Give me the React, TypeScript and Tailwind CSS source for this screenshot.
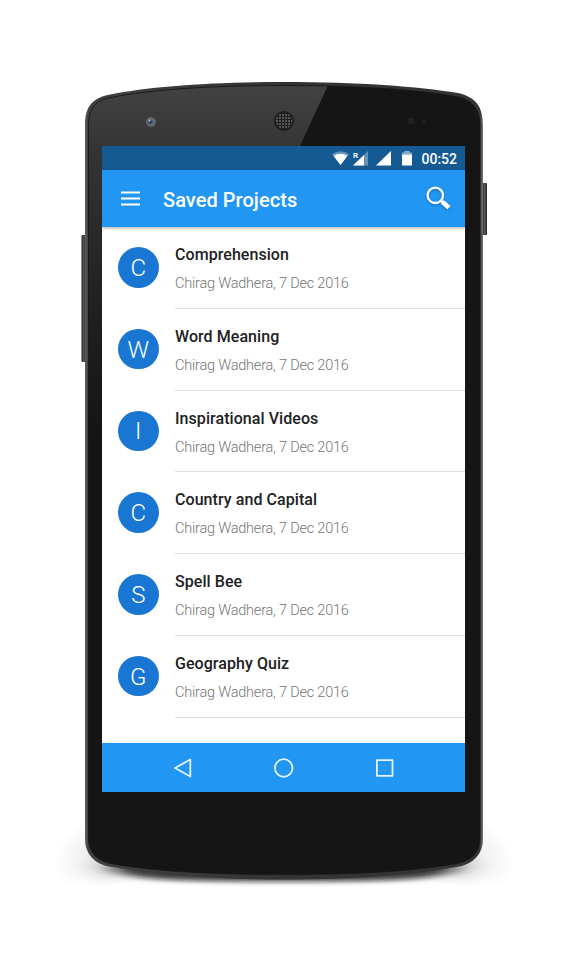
import React from "react";

const projects = [
  "Comprehension",
  "Word Meaning",
  "Inspirational Videos",
  "Country and Capital",
  "Spell Bee",
  "Geography Quiz",
];

const outline =
  "M85 125 C85 107 92 98 110 94.500 C150 86.500 210 82 284 82 C358 82 418 86.500 458 93 C476 97 483 107 483 125 V839 C483 854 473 864 459 866.500 C415 875 355 879.500 284 879.500 C213 879.500 153 875 109 866.500 C95 864 85 854 85 839 Z";
const face =
  "M88.500 126 C88.500 110 94 100.500 111 97.500 C152 89.500 210 85.500 284 85.500 C358 85.500 416 89.500 456 96.500 C473 99.500 480 110 480 126 V839 C480 852 471 861 457 863.500 C415 871.500 355 874.500 284 874.500 C213 874.500 153 871.500 111 863.500 C97 861 88.500 852 88.500 839 Z";

function PhoneBody() {
  return (
    <svg className="absolute inset-0" width="568" height="960" viewBox="0 0 568 960" fill="none" aria-hidden="true">
      <defs>
        <linearGradient id="rim" x1="85" y1="0" x2="483" y2="0" gradientUnits="userSpaceOnUse">
          <stop offset="0" stopColor="#606060" />
          <stop offset=".008" stopColor="#404040" />
          <stop offset=".5" stopColor="#333" />
          <stop offset=".992" stopColor="#343434" />
          <stop offset="1" stopColor="#777" />
        </linearGradient>
        <linearGradient id="gloss" x1="150" y1="90" x2="150" y2="430" gradientUnits="userSpaceOnUse">
          <stop stopColor="#414141" />
          <stop offset=".18" stopColor="#343434" />
          <stop offset=".65" stopColor="#202020" />
          <stop offset="1" stopColor="#151515" />
        </linearGradient>
        <linearGradient id="key" x1="0" x2="1">
          <stop stopColor="#222" />
          <stop offset=".5" stopColor="#555" />
          <stop offset="1" stopColor="#222" />
        </linearGradient>
        <radialGradient id="lens">
          <stop stopColor="#34445c" />
          <stop offset=".45" stopColor="#666c76" />
          <stop offset="1" stopColor="#606060" />
        </radialGradient>
        <radialGradient id="sideShade">
          <stop stopColor="#000" stopOpacity=".22" />
          <stop offset=".5" stopColor="#000" stopOpacity=".06" />
          <stop offset="1" stopColor="#000" stopOpacity="0" />
        </radialGradient>
        <linearGradient id="fade" x1="0" y1="790" x2="0" y2="886" gradientUnits="userSpaceOnUse">
          <stop stopColor="#fff" />
          <stop offset=".8" stopColor="#fff" />
          <stop offset="1" stopColor="#000" />
        </linearGradient>
        <mask id="ground" maskUnits="userSpaceOnUse" x="0" y="790" width="568" height="96">
          <rect y="790" width="568" height="96" fill="url(#fade)" />
        </mask>
        <pattern id="mesh" width="3" height="3" patternUnits="userSpaceOnUse">
          <rect width="3" height="3" fill="#1e1e1e" />
          <circle cx="1" cy="1" r=".95" fill="#707070" />
        </pattern>
        <clipPath id="faceClip">
          <path d={face} />
        </clipPath>
        <filter id="blur" x="-20%" y="-200%" width="140%" height="500%">
          <feGaussianBlur stdDeviation="10 2.4" />
        </filter>
      </defs>
      <g mask="url(#ground)">
        <ellipse cx="108" cy="870" rx="54" ry="56" fill="url(#sideShade)" />
        <ellipse cx="460" cy="870" rx="54" ry="56" fill="url(#sideShade)" />
      </g>
      <path d="M112 866 H456 C452 880 400 881.500 284 881.500 C168 881.500 116 880 112 866Z" fill="#111" opacity=".8" filter="url(#blur)" />
      <rect x="81.500" y="235" width="4.500" height="127" rx="1" fill="url(#key)" />
      <rect x="482" y="183" width="5" height="52" rx="1" fill="url(#key)" />
      <path d={outline} fill="url(#rim)" />
      <path d={face} fill="#151515" />
      <path d="M80 70 H335 L300 146 L200 440 H80Z" fill="url(#gloss)" clipPath="url(#faceClip)" />
      <path d={face} stroke="#161616" strokeWidth=".8" />
      <circle cx="151" cy="122" r="5" fill="url(#lens)" />
      <circle cx="150" cy="122" r="2" fill="#2b3f60" />
      <circle cx="149.500" cy="120.500" r=".9" fill="#bcd0ea" />
      <circle cx="284" cy="121" r="10" fill="#1e1e1e" />
      <circle cx="284" cy="121" r="8.200" fill="url(#mesh)" />
      <circle cx="411" cy="121" r="3.500" fill="#202020" />
      <circle cx="424" cy="121" r="2.500" fill="#202020" />
    </svg>
  );
}

function StatusBar() {
  return (
    <div className="flex h-6 shrink-0 items-center justify-end bg-[#155a93] pr-2 text-white">
      <svg width="83" height="24" viewBox="0 0 83 24" aria-hidden="true">
        <path d="M1 8 Q9.500 2.500 18 8 L9.500 19Z" fill="#fff" opacity=".35" />
        <path d="M2.500 9.700 Q9.500 5.700 16.500 9.700 L9.500 19Z" fill="#fff" />
        <path d="M37 5 V19.500 H22Z" fill="#fff" opacity=".35" />
        <path d="M33 9 V19.500 H22Z" fill="#fff" />
        <text x="22" y="12" fill="#fff" className="font-['Roboto',sans-serif] text-[8px] font-bold">R</text>
        <path d="M60 5 V19.500 H45Z" fill="#fff" />
        <path d="M73.500 5 H78.500 V6.500 H81 V8.500 H71 V6.500 H73.500Z" fill="#fff" opacity=".5" />
        <path d="M71 8.500 H81 V19.500 H71Z" fill="#fff" />
      </svg>
      <span className="ml-[7px] pt-px text-[14px] font-medium leading-6">00:52</span>
    </div>
  );
}

function AppBar() {
  return (
    <header className="relative flex h-[57px] shrink-0 items-center bg-[#2196f3] pl-[19px] pr-[12px] text-white shadow-[0_1px_3px_rgba(0,0,0,0.35)]">
      <svg width="19" height="15" viewBox="0 0 19 15" aria-hidden="true">
        <path d="M0 1.500H19M0 7.500H19M0 13.500H19" stroke="#fff" strokeWidth="1.900" />
      </svg>
      <h1 className="ml-[23px] grow pt-[2px] text-[20px] font-medium tracking-[0.05px]">Saved Projects</h1>
      <svg className="drop-shadow-[0_1px_1px_rgba(0,0,0,0.3)]" width="28" height="28" viewBox="0 0 28 28" fill="none" stroke="#fff" aria-hidden="true">
        <circle cx="10.300" cy="10.300" r="7.700" strokeWidth="2.300" />
        <path d="M15.500 15.500L19 18.500" strokeWidth="2.400" />
        <path d="M17.200 16.800L24 22.700" strokeWidth="4.600" />
      </svg>
    </header>
  );
}

function ProjectRow({ name }: { name: string }) {
  return (
    <li className="flex h-[81.750px] pl-4">
      <div className="mt-5 flex size-[40.500px] shrink-0 items-center justify-center rounded-full bg-[#1976d2] pt-px text-[24px] font-light text-white">
        {name[0]}
      </div>
      <div className="ml-4 flex grow flex-col border-b border-[#e0e0e0] pl-[0.500px] pt-4">
        <h2 className="text-[16px] font-medium leading-6 tracking-[0.060px] text-[#212121]">{name}</h2>
        <p className="mt-[6px] text-[14.500px] font-light leading-[22px] tracking-[-0.210px] text-[#757575]">Chirag Wadhera, 7 Dec 2016</p>
      </div>
    </li>
  );
}

function NavBar() {
  return (
    <nav className="flex h-[49px] shrink-0 items-center justify-center gap-[81px] bg-[#2196f3]">
      <svg width="20" height="20" viewBox="0 0 20 20" fill="none" stroke="#e3f2fd" strokeWidth="1.800" strokeLinejoin="round" aria-hidden="true">
        <path d="M17.300 1.500V18.500L2 10Z" />
      </svg>
      <svg width="20" height="20" viewBox="0 0 20 20" fill="none" stroke="#e3f2fd" strokeWidth="1.800" aria-hidden="true">
        <circle cx="9.700" cy="10" r="8.800" />
      </svg>
      <svg width="20" height="20" viewBox="0 0 20 20" fill="none" stroke="#e3f2fd" strokeWidth="1.800" strokeLinejoin="round" aria-hidden="true">
        <rect x="1.900" y="2.200" width="15.600" height="15.600" />
      </svg>
    </nav>
  );
}

export default function App() {
  return (
    <div className="relative h-[960px] w-[568px] overflow-hidden bg-white pl-[102px] pt-[146px] font-['Roboto',sans-serif]">
      <PhoneBody />
      <main className="relative flex h-[646px] w-[363px] flex-col overflow-hidden bg-white">
        <StatusBar />
        <AppBar />
        <ul className="grow">
          {projects.map((name) => (
            <ProjectRow key={name} name={name} />
          ))}
        </ul>
        <NavBar />
      </main>
    </div>
  );
}
